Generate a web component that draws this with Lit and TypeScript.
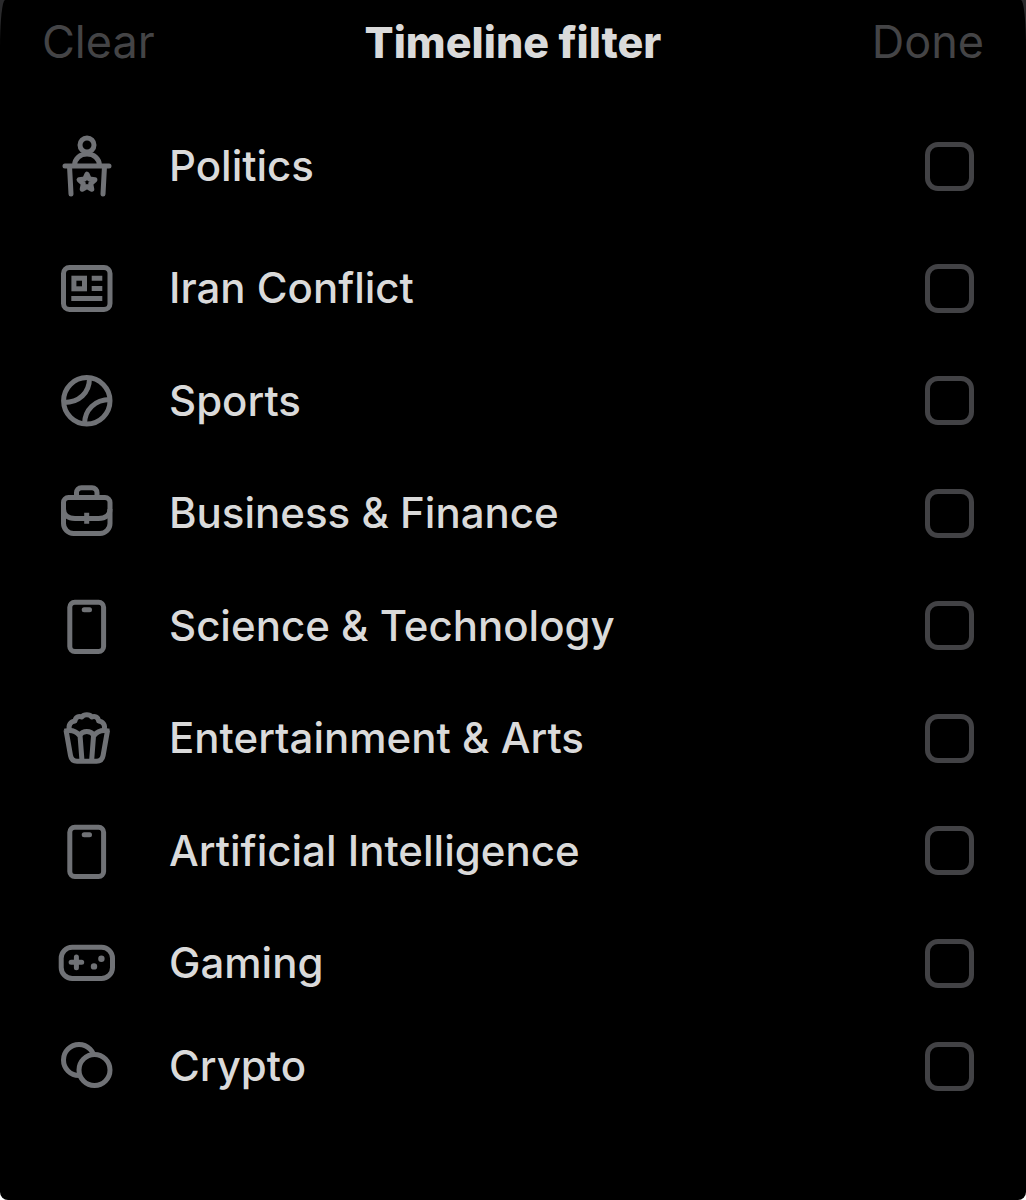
import { LitElement, html, svg, css } from "lit";
import type { SVGTemplateResult } from "lit";
import { customElement, state } from "lit/decorators.js";

const icons: Record<string, SVGTemplateResult> = {
  podium: svg`
    <circle cx="32" cy="11" r="7" />
    <path d="M19.5 31C20 24.500 25 20 32 20S44 24.500 44.500 31M10 32H54M14.500 32L16 60M49.500 32L48 60" />
    <path d="M32 40.200L34.300 45L39.900 45.800L35.700 49.700L36.800 55.200L32 52.600L27.200 55.200L28.300 49.700L24.100 45.800L29.700 45Z" />`,
  news: svg`
    <rect x="8.500" y="11.500" width="46.500" height="42" rx="6" />
    <rect x="18.900" y="22.200" width="10.600" height="10.600" stroke-linejoin="miter" />
    <path d="M36.700 22.200H47.300M36.700 32.600H47.300M16.300 42.600H47.300" stroke-linecap="butt" />`,
  ball: svg`
    <circle cx="31.800" cy="31.800" r="23.200" />
    <path d="M34.500 9C34.500 24 24 33.500 9 33.500M55 30.500C40 30.500 29.500 41 29.500 55" stroke-linecap="butt" />`,
  briefcase: svg`
    <path d="M13.500 16.500H50A5 5 0 0 1 55 21.500V42.500A10 10 0 0 1 45 52.500H18.500A10 10 0 0 1 8.500 42.500V21.500A5 5 0 0 1 13.500 16.500Z" />
    <path d="M21.500 16V12A5 5 0 0 1 26.500 6.700H37A5 5 0 0 1 42 12V16M8.500 28C8.500 34 13 37.500 20 37.500H43.500C50.500 37.500 55 34 55 28M31.700 31.700V42.700" stroke-linecap="butt" />`,
  phone: svg`
    <rect x="14.800" y="8.200" width="33.800" height="49.300" rx="5" />
    <path d="M29.200 15.800H34.500" />`,
  popcorn: svg`
    <path d="M11 24L15.500 49.500C16.200 53.500 18.500 55.200 22 55.200H41.500C45 55.200 47.400 53.500 48.100 49.500L52.600 24" stroke-linecap="butt" />
    <path d="M9.500 25.200C16 23.500 21 25 24.500 29.500C28 24.300 35.600 24.300 39.100 29.500C42.600 25 47.600 23.500 54.100 25.200M25 29L27 55M38.600 29L36.600 55" stroke-linecap="butt" />
    <path d="M14.500 24C13 19 15.500 15.500 20 15C20.500 11 24 9.500 26.800 11C29 8 34.600 8 36.800 11C39.600 9.500 43.100 11 43.600 15C48.100 15.500 50.600 19 49.100 24" />`,
  gamepad: svg`
    <rect x="6.200" y="16.200" width="51.300" height="31.300" rx="11" />
    <path d="M16.100 31.300H26.700M21.400 26V36.700" />
    <path d="M39 35.400H39.010M46.400 27.700H46.410" stroke-width="6.400" />`,
  coins: svg`
    <circle cx="24" cy="26" r="15.500" />
    <circle cx="39.500" cy="36" r="15.500" fill="#000" />`,
};

const topics = [
  { id: "politics", label: "Politics", icon: "podium" },
  { id: "iran", label: "Iran Conflict", icon: "news" },
  { id: "sports", label: "Sports", icon: "ball" },
  { id: "business", label: "Business & Finance", icon: "briefcase" },
  { id: "science", label: "Science & Technology", icon: "phone" },
  { id: "arts", label: "Entertainment & Arts", icon: "popcorn" },
  { id: "ai", label: "Artificial Intelligence", icon: "phone" },
  { id: "gaming", label: "Gaming", icon: "gamepad" },
  { id: "crypto", label: "Crypto", icon: "coins" },
];

@customElement("app-root")
export class AppRoot extends LitElement {
  static styles = css`
    :host {
      display: block;
      min-height: 100vh;
      background: linear-gradient(#2a2a2c 50%, #fff 50%);
      font-family: Inter, "Liberation Sans", sans-serif;
    }
    .sheet {
      box-sizing: border-box;
      min-height: 100vh;
      background: #000;
      border-radius: 5px 5px 8px 8px / 48px 48px 8px 8px;
    }
    .header {
      display: grid;
      grid-template-columns: 1fr auto 1fr;
      align-items: baseline;
      height: 100px;
      box-sizing: border-box;
      padding: 12px 42px 0;
    }
    .title {
      margin: 0;
      color: #dadada;
      font-size: 43px;
      font-weight: 800;
      line-height: 60px;
    }
    .action {
      justify-self: start;
      margin: 0;
      padding: 0;
      border: 0;
      background: none;
      color: #444446;
      font-family: inherit;
      font-size: 45px;
      font-weight: 400;
      line-height: 60px;
      cursor: pointer;
    }
    .done {
      justify-self: end;
    }
    .list {
      margin: 0;
      padding: 0;
      list-style: none;
    }
    .row {
      display: flex;
      align-items: center;
      gap: 50px;
      height: 113px;
      padding: 0 52px 0 55px;
      color: #dadada;
      font-size: 42px;
      font-weight: 500;
      line-height: 56px;
      cursor: pointer;
    }
    .item:nth-child(even) .row {
      height: 112px;
    }
    .item:first-child .row {
      height: 132px;
    }
    .item:last-child .row {
      height: 94px;
    }
    .icon {
      flex: none;
      width: 64px;
      height: 64px;
      fill: none;
      stroke: #707276;
      stroke-width: 5;
      stroke-linecap: round;
      stroke-linejoin: round;
    }
    .label {
      flex: 1;
    }
    .box {
      flex: none;
      appearance: none;
      box-sizing: border-box;
      width: 49px;
      height: 49px;
      margin: 0;
      border: 5px solid #424245;
      border-radius: 13px;
      background: transparent;
      cursor: pointer;
    }
    .box:checked {
      border-color: #dadada;
      background: #dadada;
    }
  `;

  @state() private selected = new Set<string>();

  private toggle(id: string) {
    const next = new Set(this.selected);
    if (!next.delete(id)) next.add(id);
    this.selected = next;
  }

  private clear() {
    this.selected = new Set();
  }

  render() {
    return html`
      <main class="sheet">
        <header class="header">
          <button class="action" type="button" @click=${this.clear}>Clear</button>
          <h1 class="title">Timeline filter</h1>
          <button class="action done" type="button">Done</button>
        </header>
        <ul class="list">
          ${topics.map(
            (t) => html`
              <li class="item">
                <label class="row" for=${t.id}>
                  <svg class="icon" viewBox="0 0 64 64" aria-hidden="true">${icons[t.icon]}</svg>
                  <span class="label">${t.label}</span>
                  <input
                    class="box"
                    type="checkbox"
                    id=${t.id}
                    .checked=${this.selected.has(t.id)}
                    @change=${() => this.toggle(t.id)}
                  />
                </label>
              </li>
            `
          )}
        </ul>
      </main>
    `;
  }
}
